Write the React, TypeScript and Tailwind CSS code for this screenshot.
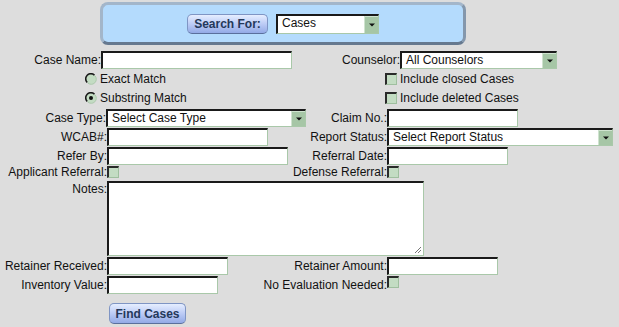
import React from "react";

const font = "font-['Liberation_Sans',Arial,sans-serif]";

function Label({ className = "", children }: { className?: string; children: React.ReactNode }) {
  return <div className={`shrink-0 text-right text-[12px] leading-[14px] text-[#111] whitespace-nowrap ${className}`}>{children}</div>;
}

function TextBox({ className = "" }: { className?: string }) {
  return (
    <div
      className={`shrink-0 h-[18px] bg-white border-t-2 border-l-2 border-b border-r border-t-[#1a1a1a] border-l-[#1a1a1a] border-b-[#a9c8a9] border-r-[#a9c8a9] ${className}`}
    />
  );
}

function Select({ className = "", value }: { className?: string; value: string }) {
  return (
    <div
      className={`shrink-0 flex h-[18px] bg-white border-t-2 border-l-2 border-b border-r border-t-[#1a1a1a] border-l-[#1a1a1a] border-b-[#a9c8a9] border-r-[#a9c8a9] ${className}`}
    >
      <div className="flex-1 pl-[4px] text-[12px] leading-[15px] text-[#111] whitespace-nowrap overflow-hidden">{value}</div>
      <div className="w-[14px] h-full flex items-center justify-center bg-[#a6c6a6] border-l border-t border-l-[#cfe3cf] border-t-[#cfe3cf]">
        <svg width="6" height="4" viewBox="0 0 6 4">
          <path d="M0 0.5h6L3 3.5z" fill="#111" />
        </svg>
      </div>
    </div>
  );
}

function Check({ className = "" }: { className?: string }) {
  return (
    <div
      className={`shrink-0 w-[12px] h-[12px] bg-[#c3dcc3] border-t-2 border-l-2 border-b border-r border-t-[#2a2a2a] border-l-[#2a2a2a] border-b-[#9fbf9f] border-r-[#9fbf9f] ${className}`}
    />
  );
}

function Radio({ checked }: { checked?: boolean }) {
  return (
    <svg width="12" height="12" viewBox="0 0 12 12" className="shrink-0">
      <circle cx="6" cy="6" r="5" fill="#c3dcc3" />
      <path d="M2.2 9.5A5 5 0 0 1 9.5 2.2" stroke="#1a1a1a" strokeWidth="1.6" fill="none" />
      <path d="M9.8 2.6A5 5 0 0 1 2.6 9.8" stroke="#a9c8a9" strokeWidth="1" fill="none" />
      {checked && <circle cx="6" cy="6" r="2" fill="#111" />}
    </svg>
  );
}

function BlueButton({ className = "", children }: { className?: string; children: React.ReactNode }) {
  return (
    <div
      className={`flex items-center justify-center rounded-[5px] border border-[#7f95c4] border-b-[#5a6f9c] bg-gradient-to-b from-[#e6eeff] via-[#bccbf5] to-[#93aae6] text-[12px] font-bold text-[#24385a] ${className}`}
    >
      {children}
    </div>
  );
}

export default function App() {
  return (
    <div className={`w-[619px] h-[327px] bg-[#dddddd] overflow-hidden ${font}`}>
      {/* search header */}
      <div className="pt-[2px] pl-[100px]">
        <div className="w-[366px] h-[43px] rounded-[8px] bg-[#b4dbfd] border-[3px] border-[#a3b6ca] border-b-[#66798f] border-r-[#8497ac] flex items-center pl-[84px] gap-[8px]">
          <BlueButton className="w-[81px] h-[20px]">Search For:</BlueButton>
          <Select className="w-[103px] h-[20px]" value="Cases" />
        </div>
      </div>

      <div className="pt-[6px]">
        {/* case name / counselor */}
        <div className="flex items-center h-[18px]">
          <Label className="w-[101px]">Case Name:</Label>
          <TextBox className="w-[191px]" />
          <Label className="w-[108px]">Counselor:</Label>
          <Select className="w-[157px]" value="All Counselors" />
        </div>

        <div className="flex items-center h-[19px] text-[12px] text-[#111]">
          <div className="w-[385px] pl-[85px] flex items-center gap-[3px]">
            <Radio />
            <span>Exact Match</span>
          </div>
          <div className="flex items-center gap-[3px]">
            <Check />
            <span>Include closed Cases</span>
          </div>
        </div>
        <div className="flex items-center h-[19px] text-[12px] text-[#111]">
          <div className="w-[385px] pl-[85px] flex items-center gap-[3px]">
            <Radio checked />
            <span>Substring Match</span>
          </div>
          <div className="flex items-center gap-[3px]">
            <Check />
            <span>Include deleted Cases</span>
          </div>
        </div>

        <div className="pt-[1px]">
          <div className="flex items-center h-[19px]">
            <Label className="w-[106px]">Case Type:</Label>
            <Select className="w-[200px]" value="Select Case Type" />
            <Label className="w-[81px]">Claim No.:</Label>
            <TextBox className="w-[131px]" />
          </div>
          <div className="flex items-center h-[19px]">
            <Label className="w-[107px]">WCAB#:</Label>
            <TextBox className="w-[161px]" />
            <Label className="w-[119px]">Report Status:</Label>
            <Select className="w-[226px]" value="Select Report Status" />
          </div>
          <div className="flex items-center h-[19px]">
            <Label className="w-[107px]">Refer By:</Label>
            <TextBox className="w-[181px]" />
            <Label className="w-[99px]">Referral Date:</Label>
            <TextBox className="w-[121px]" />
          </div>
          <div className="flex items-center h-[13px]">
            <Label className="w-[107px]">Applicant Referral:</Label>
            <Check />
            <Label className="w-[268px]">Defense Referral:</Label>
            <Check />
          </div>
          <div className="flex items-start mt-[3px]">
            <Label className="w-[107px] pt-[1px]">Notes:</Label>
            <div className="relative w-[317px] h-[75px] bg-white border-t-2 border-l-2 border-b border-r border-t-[#1a1a1a] border-l-[#1a1a1a] border-b-[#a9c8a9] border-r-[#a9c8a9]">
              <svg width="8" height="8" viewBox="0 0 8 8" className="absolute right-[1px] bottom-[1px]">
                <path d="M7 1L1 7M7 4L4 7" stroke="#777" strokeWidth="1" />
              </svg>
            </div>
          </div>
          <div className="flex items-center h-[19px]">
            <Label className="w-[107px]">Retainer Received:</Label>
            <TextBox className="w-[121px]" />
            <Label className="w-[159px]">Retainer Amount:</Label>
            <TextBox className="w-[111px]" />
          </div>
          <div className="flex items-center h-[19px]">
            <Label className="w-[107px]">Inventory Value:</Label>
            <TextBox className="w-[111px]" />
            <Label className="w-[169px]">No Evaluation Needed:</Label>
            <Check className="self-start mt-[1px]" />
          </div>
        </div>

        <div className="pl-[109px] pt-[9px]">
          <BlueButton className="w-[77px] h-[21px]">Find Cases</BlueButton>
        </div>
      </div>
    </div>
  );
}
